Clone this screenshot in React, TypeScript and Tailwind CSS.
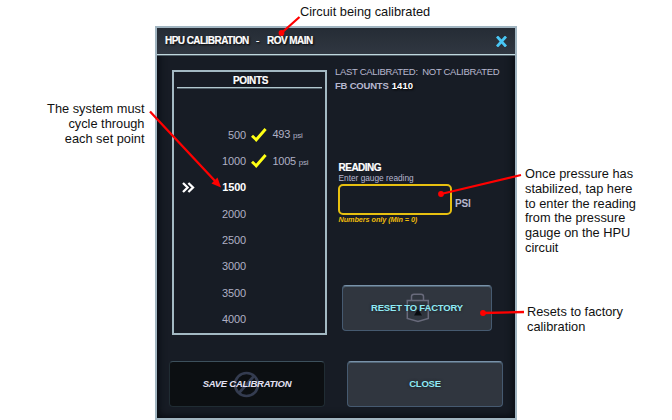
import type { ReactNode } from "react";

type Point = { value: string; reading?: string; active?: boolean };

const points: Point[] = [
  { value: "500", reading: "493" },
  { value: "1000", reading: "1005" },
  { value: "1500", active: true },
  { value: "2000" },
  { value: "2500" },
  { value: "3000" },
  { value: "3500" },
  { value: "4000" },
];

function Check() {
  return (
    <svg width="16" height="14" viewBox="0 0 16 14" fill="none" stroke="#ffff14" strokeWidth="2.9">
      <path d="M1 7.8 L5.2 11.8 L14.6 1" />
    </svg>
  );
}

function PointRow({ value, reading, active }: Point) {
  return (
    <div className="flex h-[26.3px] items-center">
      <div className="flex w-[20.5px] justify-end">
        {active && (
          <svg width="13" height="11" viewBox="0 0 13 11" fill="none" stroke="#ffffff" strokeWidth="2.3">
            <path d="M1 1 L5.6 5.5 L1 10 M6.4 1 L11 5.5 L6.4 10" />
          </svg>
        )}
      </div>
      <div className={active ? "w-[51.5px] text-right text-[11px] font-bold tracking-[-0.2px] text-white" : "w-[51.5px] text-right text-[11px] tracking-[-0.1px] text-[#b0b0c4]"}>
        {value}
      </div>
      {reading && (
        <>
          <div className="ml-[5px] w-[21.5px]"><Check /></div>
          <div className="mt-px flex items-baseline gap-[3px] text-[11px] tracking-[-0.3px] text-[#b0b0c4]">
            {reading}<span className="text-[8px] tracking-[-0.2px]">psi</span>
          </div>
        </>
      )}
    </div>
  );
}

function PanelButton({ children, className }: { children: ReactNode; className: string }) {
  return (
    <button className={`relative flex h-[46px] items-center justify-center rounded-[4px] ${className}`}>
      {children}
    </button>
  );
}

export default function App() {
  return (
    <div className="relative flex h-[420px] w-[672px] flex-col overflow-hidden bg-white font-['Liberation_Sans',Arial,sans-serif] text-[12.8px] leading-[14.8px] text-[#111111]">
      <div className="h-[26px] pt-[5px] pl-[300px] whitespace-nowrap">Circuit being calibrated</div>

      <div className="flex h-[394px]">
        <aside className="w-[155px] pt-[76px] pr-[10.5px] text-right whitespace-nowrap">
          The system must<br />cycle through<br />each set point
        </aside>

        <main className="flex h-[394px] w-[362px] flex-col border-2 border-[#a1b5c1] bg-[#171c25] shadow-[inset_0_0_7px_2px_#080c12]">
          <header className="flex h-[27px] shrink-0 items-center justify-between border-b border-[#c0d8de] bg-linear-to-b from-[#252c35] to-[#303741] pr-2 pl-2 shadow-[0_1px_0_#526069]">
            <h1 className="flex text-[10px] font-bold tracking-[-0.55px] whitespace-pre text-white [-webkit-text-stroke:0.2px_#ffffff] [text-shadow:1px_1px_2px_#000]">
              <span className="w-[84px]">HPU CALIBRATION</span>
              <span className="w-[18px] pl-[7px] font-normal">-</span>
              <span>ROV MAIN</span>
            </h1>
            <svg width="11" height="11" viewBox="0 0 11 11" fill="none" stroke="#49c7f5" strokeWidth="2.8">
              <path d="M1 0.5 L10 10.5 M10 0.5 L1 10.5" />
            </svg>
          </header>

          <div className="flex h-[280px] pl-[15px]">
            <section className="mt-[15px] h-[265px] w-[155px] border-2 border-[#a3b9c3]">
              <h2 className="mx-[3px] h-[16px] border-b border-[#b2c9d0] pt-[2px] pl-[2px] text-center text-[10px] leading-[13px] font-bold tracking-[-0.35px] text-white shadow-[0_1px_0_#526069] [-webkit-text-stroke:0.2px_#ffffff] [text-shadow:1px_1px_2px_#000]">POINTS</h2>
              <div className="pt-[34px]">
                {points.map((point) => <PointRow key={point.value} {...point} />)}
              </div>
            </section>

            <section className="flex w-[180px] flex-col pl-[8px] text-[#b8b8d0]">
              <div className="mt-[10px] h-[14px] text-[9.5px] leading-[14px] tracking-[-0.32px] whitespace-pre">LAST CALIBRATED:  NOT CALIBRATED</div>
              <div className="flex h-[14px] gap-[3px] text-[9.5px] leading-[14px] font-bold tracking-[-0.2px]">
                FB COUNTS <span className="tracking-[0.1px] text-white [text-shadow:1px_1px_2px_#000]">1410</span>
              </div>
              <div className="mt-[70px] ml-[3.5px] h-[10px] text-[10px] leading-[10px] font-bold tracking-[-0.5px] text-white [-webkit-text-stroke:0.2px_#ffffff]">READING</div>
              <div className="ml-[3.5px] h-[11px] text-[8.3px] leading-[11px]">Enter gauge reading</div>
              <div className="ml-[3px] flex items-center">
                <div className="h-[31px] w-[114px] rounded-[5px] border-2 border-[#e7c010]" />
                <span className="mt-[10px] ml-[3px] text-[10px] font-bold tracking-[-0.2px]">PSI</span>
              </div>
              <div className="ml-[3.5px] h-[10px] text-[7.3px] leading-[10px] font-bold tracking-[-0.08px] text-[#f0bc0c] italic">Numbers only (Min = 0)</div>
              <PanelButton className="mt-[60px] ml-[7px] w-[150px] border-[1.5px] border-[#465a70] border-t-[#7892a9] bg-[#30363f] shadow-[inset_0_1px_0_#526576]">
                <svg className="absolute top-[7px] left-[63px]" width="24" height="30" viewBox="0 0 24 30" fill="none" stroke="#686a7b" strokeWidth="1.5">
                  <path d="M5.5 7.5 V3.5 Q5.5 1.2 8 1.2 H15 Q17.5 1.2 17.5 3.5 V7.5 M1.3 7.5 H22.3 V25.5 L12 28.5 L1.3 25.5 Z" />
                  <path d="M12 16 L16 22.5 H8 Z" fill="#090c10" stroke="none" />
                </svg>
                <span className="relative text-[9.5px] font-bold tracking-[-0.18px] text-[#8feaf5] [text-shadow:0_0_3px_#1a1e23]">RESET TO FACTORY</span>
              </PanelButton>
            </section>
          </div>

          <footer className="mt-[26px] flex gap-[22px] pl-[12px]">
            <PanelButton className="w-[156px] border-[1.5px] border-[#202c33] border-t-[#3d505c] bg-[#0c0f12]">
              <svg className="absolute top-[9px] left-[63px]" width="27" height="27" viewBox="0 0 27 27" fill="none" stroke="#343c50" strokeWidth="2.7">
                <circle cx="13.5" cy="13.5" r="11.5" />
                <path d="M6 22 L21 5" />
              </svg>
              <span className="relative text-[9.5px] font-bold tracking-[-0.25px] text-[#e3e1f4] italic">SAVE CALIBRATION</span>
            </PanelButton>
            <PanelButton className="w-[156px] border-[1.5px] border-[#465a70] border-t-[#7892a9] bg-[#30363f] shadow-[inset_0_1px_0_#526576]">
              <span className="text-[9.5px] font-bold tracking-[-0.2px] text-[#8feaf5] [text-shadow:0_0_3px_#1a1e23]">CLOSE</span>
            </PanelButton>
          </footer>
        </main>

        <aside className="flex flex-col pt-[141px] pl-[8px] whitespace-nowrap">
          <p className="h-[138px]">Once pressure has<br />stabilized, tap here<br />to enter the reading<br />from the pressure<br />gauge on the HPU<br />circuit</p>
          <p className="pl-[2px]">Resets to factory<br />calibration</p>
        </aside>
      </div>

      <svg className="pointer-events-none absolute inset-0" width="672" height="420" fill="none" stroke="#ff0000" strokeWidth="2.3">
        <path d="M299.5 17 L281.5 33 M150 111.5 L216 182 M521 175 L441 194 M524 312 L483 313" />
        <g fill="#ff0000" stroke="none">
          <circle cx="281.5" cy="33" r="2.9" />
          <path d="M221 187.5 L211.5 183.5 L217.5 177.5 Z" />
          <circle cx="441" cy="194" r="2.9" />
          <circle cx="483" cy="313" r="2.9" />
        </g>
      </svg>
    </div>
  );
}
